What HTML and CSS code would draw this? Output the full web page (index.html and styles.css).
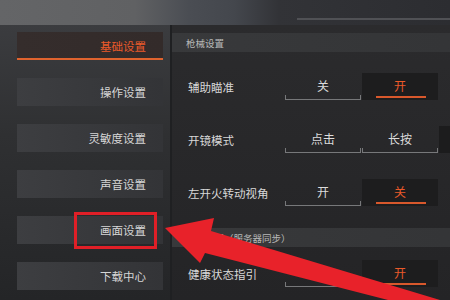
FILE: index.html
```html
<!DOCTYPE html>
<html lang="zh">
<head>
<meta charset="utf-8">
<link rel="stylesheet" href="styles.css">
</head>
<body>
<div class="screen">
  <div class="topbar"><div class="topline"></div></div>
  <div class="main">
    <nav class="side">
      <div class="tab on">基础设置</div>
      <div class="tab">操作设置</div>
      <div class="tab">灵敏度设置</div>
      <div class="tab">声音设置</div>
      <div class="tab marked">画面设置</div>
      <div class="tab">下载中心</div>
    </nav>
    <section class="content">
      <div class="sec-head">枪械设置</div>
      <div class="row first">
        <span class="label">辅助瞄准</span>
        <div class="seg"><span class="opt">关</span><span class="opt on">开</span></div>
      </div>
      <div class="row">
        <span class="label">开镜模式</span>
        <div class="seg"><span class="opt">点击</span><span class="opt">长按</span><span class="opt dark"></span></div>
      </div>
      <div class="row">
        <span class="label">左开火转动视角</span>
        <div class="seg"><span class="opt">开</span><span class="opt on">关</span></div>
      </div>
      <div class="sec-head second">其他设置（服务器同步）</div>
      <div class="row">
        <span class="label">健康状态指引</span>
        <div class="seg"><span class="opt">关</span><span class="opt on">开</span></div>
      </div>
    </section>
  </div>
  <svg class="arrow" width="450" height="300" viewBox="0 0 450 300">
    <polygon points="165,228 214,218 211,231 440,300 388,300 205,253 200,263" fill="#e8222a"/>
  </svg>
</div>
</body>
</html>
```
FILE: styles.css
```css
html, body {
  margin: 0;
  padding: 0;
}
body {
  width: 450px;
  height: 300px;
  overflow: hidden;
  background: #262628;
  font-family: "Noto Sans CJK SC", "Noto Sans", sans-serif;
}
.screen {
  position: relative;
  width: 450px;
  height: 300px;
  overflow: hidden;
  display: flex;
  flex-direction: column;
}
.topbar {
  height: 25px;
  flex: none;
  background: linear-gradient(90deg, #646567 0%, #606163 30%, #4a4d53 42%, #44474d 52%, #323337 62%, #2c2d31 100%);
  display: flex;
  align-items: flex-start;
  justify-content: flex-end;
}
.topline {
  margin-top: 18px;
  width: 153px;
  height: 2px;
  background: #505155;
}
.main {
  flex: 1;
  display: flex;
}
.side {
  width: 172px;
  flex: none;
  box-sizing: border-box;
  padding: 7px 7px 0 17px;
  display: flex;
  flex-direction: column;
  gap: 18px;
  background: linear-gradient(180deg, #3b3c3f 0%, #2f3032 40%, #242527 100%);
  border-right: 2px solid #1f2022;
}
.tab {
  height: 28px;
  box-sizing: border-box;
  display: flex;
  align-items: center;
  justify-content: flex-end;
  padding-right: 17px;
  font-size: 11.5px;
  color: #d6d6d6;
  background: linear-gradient(90deg, #3d3e41 0%, #37383b 60%, #333437 100%);
}
.tab.on {
  color: #ea5a2a;
  background: linear-gradient(90deg, #352d2c 0%, #332b2a 100%);
  border-bottom: 2px solid #e0632e;
  padding-top: 2px;
}
.tab.marked {
  position: relative;
}
.tab.marked::after {
  content: "";
  position: absolute;
  left: 57px;
  top: -4px;
  width: 77px;
  height: 31px;
  border: 3px solid #e01f27;
}
.content {
  flex: 1;
  padding-top: 8px;
  background: linear-gradient(180deg, #2b2b2d 0%, #242426 100%);
}
.sec-head {
  height: 19px;
  display: flex;
  align-items: center;
  padding-left: 14px;
  font-size: 9.5px;
  color: #b8b8b8;
  background: linear-gradient(90deg, #38393b 0%, #333436 100%);
}
.sec-head.second {
  margin-top: 9px;
}
.row {
  height: 53px;
  display: flex;
  align-items: center;
}
.row.first {
  margin-top: 8px;
}
.label {
  width: 113px;
  flex: none;
  box-sizing: border-box;
  padding-left: 16px;
  font-size: 11.5px;
  color: #d8d8d8;
  white-space: nowrap;
}
.seg {
  display: flex;
  gap: 1px;
}
.opt {
  position: relative;
  width: 76px;
  height: 27px;
  flex: none;
  display: flex;
  align-items: center;
  justify-content: center;
  padding-bottom: 2px;
  box-sizing: border-box;
  font-size: 12px;
  color: #dcdcdc;
}
.opt::after {
  content: "";
  position: absolute;
  left: 0;
  right: 0;
  bottom: 0;
  height: 4px;
  border: 1px solid #77787a;
  border-top: none;
}
.opt.on {
  color: #ea5a2a;
  background: #1d1d1e;
}
.opt.on::after {
  left: 14px;
  right: 12px;
  bottom: 2px;
  height: 2px;
  border: none;
  background: #d8582c;
}
.opt.dark {
  background: #1c1c1d;
}
.opt.dark::after {
  display: none;
}
.arrow {
  position: absolute;
  left: 0;
  top: 0;
}
```
